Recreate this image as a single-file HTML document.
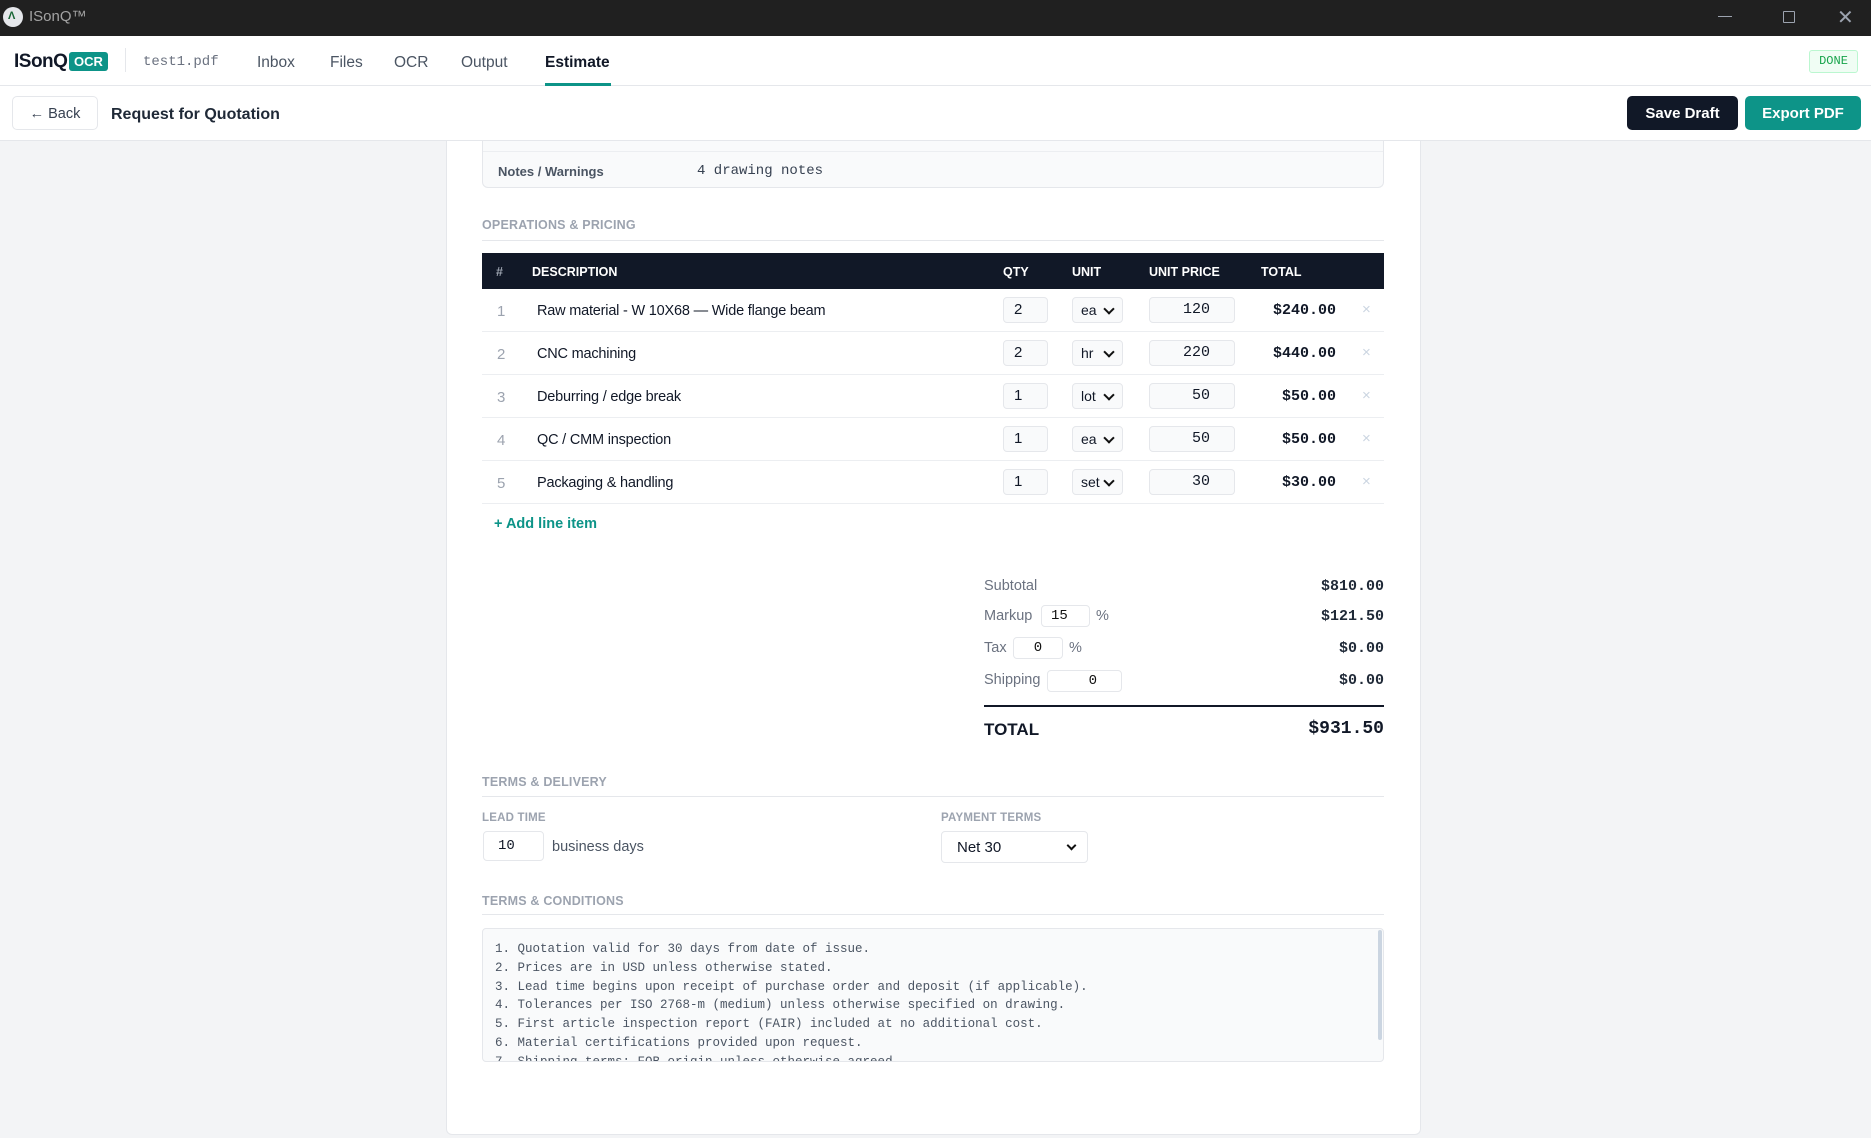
<!DOCTYPE html>
<html><head><meta charset="utf-8"><style>
*{box-sizing:border-box;margin:0;padding:0}
body{width:1871px;height:1138px;overflow:hidden;background:#f3f4f6;font-family:"Liberation Sans",sans-serif;color:#111827;position:relative}
.a{position:absolute}
.mono{font-family:"Liberation Mono",monospace}
.lbl{font-size:12.5px;font-weight:bold;color:#9ca3af;letter-spacing:.2px}
.inp{position:absolute;background:#f9fafb;border:1px solid #e5e7eb;border-radius:4px;height:26px;font-size:15px;line-height:24px}
.row{position:absolute;left:482px;width:902px;height:43px;border-bottom:1px solid #eceef1}
.row .n{position:absolute;left:15px;top:14px;font-size:15px;color:#9ca3af}
.row .d{position:absolute;left:55px;top:14px;font-size:14.5px;letter-spacing:-.2px}
.row .q{left:521px;top:8px;width:45px;padding-left:10px}
.row .u{left:590px;top:8px;width:51px;padding-left:8px;font-size:14px}
.row .u:after{content:"";position:absolute;right:9px;top:7px;width:6px;height:6px;border-right:2px solid #111;border-bottom:2px solid #111;transform:rotate(45deg)}
.row .p{left:667px;top:8px;width:86px;text-align:right;padding-right:24px;font-family:"Liberation Mono",monospace}
.row .t{position:absolute;right:48px;top:13px;font-size:15px;font-weight:bold;font-family:"Liberation Mono",monospace}
.row .x{position:absolute;left:880px;top:12px;font-size:15px;color:#cbd5e1}
.sm{position:absolute;left:984px;font-size:14.5px;color:#6b7280}
.sv{position:absolute;right:487px;font-size:15px;font-weight:bold;font-family:"Liberation Mono",monospace;color:#1f2937}
.si{position:absolute;background:#fff;border:1px solid #e5e7eb;border-radius:4px;height:22px;font-family:"Liberation Mono",monospace;font-size:14px;line-height:20px;color:#111}
</style></head><body>
<div class="a" style="left:0;top:0;width:1871px;height:36px;background:#202020"></div>
<div class="a" style="left:3px;top:7px;width:20px;height:20px;border-radius:50%;background:#e5e7eb"></div>
<div class="a" style="left:8px;top:10px;font-size:11px;color:#166534;font-weight:bold">Λ</div>
<div class="a" style="left:29px;top:8px;font-size:15px;color:#a3a3a3">ISonQ™</div>
<div class="a" style="left:1718px;top:16px;width:14px;height:1px;background:#9ca3af"></div>
<div class="a" style="left:1783px;top:11px;width:12px;height:12px;border:1px solid #9ca3af;border-radius:1px"></div>
<div class="a" style="left:1837px;top:5px;font-size:20px;color:#9ca3af">✕</div>

<div class="a" style="left:0;top:36px;width:1871px;height:50px;background:#fff;border-bottom:1px solid #e5e7eb"></div>
<div class="a" style="left:14px;top:51px;font-size:19px;font-weight:bold;letter-spacing:-.5px">ISonQ</div>
<div class="a" style="left:69px;top:52px;background:#0d9488;color:#fff;font-size:13px;font-weight:bold;padding:2px 5px;border-radius:3px;line-height:15px">OCR</div>
<div class="a" style="left:125px;top:48px;width:1px;height:24px;background:#e5e7eb"></div>
<div class="a mono" style="left:143px;top:54px;font-size:14px;color:#6b7280">test1.pdf</div>
<div class="a" style="left:257px;top:54px;font-size:15.5px;color:#4b5563">Inbox</div>
<div class="a" style="left:330px;top:54px;font-size:15.5px;color:#4b5563">Files</div>
<div class="a" style="left:394px;top:54px;font-size:15.5px;color:#4b5563">OCR</div>
<div class="a" style="left:461px;top:54px;font-size:15.5px;color:#4b5563">Output</div>
<div class="a" style="left:545px;top:54px;font-size:15.5px;font-weight:bold">Estimate</div>
<div class="a" style="left:545px;top:83px;width:66px;height:3px;background:#0d9488"></div>
<div class="a mono" style="left:1809px;top:50px;width:49px;height:23px;border:1px solid #bbf7d0;background:#f0fdf4;color:#16a34a;font-size:12px;text-align:center;line-height:21px;border-radius:3px">DONE</div>

<div class="a" style="left:0;top:86px;width:1871px;height:55px;background:#fff;border-bottom:1px solid #e5e7eb"></div>
<div class="a" style="left:12px;top:96px;width:86px;height:34px;border:1px solid #e5e7eb;border-radius:5px;font-size:14.5px;line-height:34px;text-align:center;color:#374151">← Back</div>
<div class="a" style="left:111px;top:106px;font-size:16px;font-weight:bold;color:#1f2937">Request for Quotation</div>
<div class="a" style="left:1627px;top:96px;width:111px;height:34px;background:#111827;color:#fff;border-radius:5px;font-size:15px;font-weight:bold;line-height:36px;text-align:center">Save Draft</div>
<div class="a" style="left:1745px;top:96px;width:116px;height:34px;background:#0d9488;color:#fff;border-radius:5px;font-size:15px;font-weight:bold;line-height:36px;text-align:center">Export PDF</div>

<div class="a" style="left:446px;top:141px;width:975px;height:994px;background:#fff;border:1px solid #e5e7eb;border-top:none;border-radius:0 0 6px 6px"></div>
<div class="a" style="left:482px;top:141px;width:902px;height:47px;background:#f9fafb;border:1px solid #e5e7eb;border-top:none;border-radius:0 0 6px 6px"></div>
<div class="a" style="left:483px;top:151px;width:900px;height:1px;background:#eceef1"></div>
<div class="a" style="left:498px;top:164px;font-size:13px;font-weight:bold;color:#4b5563">Notes / Warnings</div>
<div class="a mono" style="left:697px;top:163px;font-size:14px;color:#374151">4 drawing notes</div>

<div class="a lbl" style="left:482px;top:218px">OPERATIONS &amp; PRICING</div>
<div class="a" style="left:482px;top:240px;width:902px;height:1px;background:#e5e7eb"></div>
<div class="a" style="left:482px;top:253px;width:902px;height:36px;background:#111827;color:#fff;font-size:12.5px;font-weight:bold">
<span class="a" style="left:14px;top:12px;color:#9ca3af">#</span>
<span class="a" style="left:50px;top:12px">DESCRIPTION</span>
<span class="a" style="left:521px;top:12px">QTY</span>
<span class="a" style="left:590px;top:12px">UNIT</span>
<span class="a" style="left:667px;top:12px">UNIT PRICE</span>
<span class="a" style="left:779px;top:12px">TOTAL</span>
</div>
<div class="row" style="top:289px"><span class="n">1</span><span class="d">Raw material - W 10X68 — Wide flange beam</span><span class="inp q">2</span><span class="inp u">ea</span><span class="inp p">120</span><span class="t">$240.00</span><span class="x">×</span></div>
<div class="row" style="top:332px"><span class="n">2</span><span class="d">CNC machining</span><span class="inp q">2</span><span class="inp u">hr</span><span class="inp p">220</span><span class="t">$440.00</span><span class="x">×</span></div>
<div class="row" style="top:375px"><span class="n">3</span><span class="d">Deburring / edge break</span><span class="inp q">1</span><span class="inp u">lot</span><span class="inp p">50</span><span class="t">$50.00</span><span class="x">×</span></div>
<div class="row" style="top:418px"><span class="n">4</span><span class="d">QC / CMM inspection</span><span class="inp q">1</span><span class="inp u">ea</span><span class="inp p">50</span><span class="t">$50.00</span><span class="x">×</span></div>
<div class="row" style="top:461px"><span class="n">5</span><span class="d">Packaging &amp; handling</span><span class="inp q">1</span><span class="inp u">set</span><span class="inp p">30</span><span class="t">$30.00</span><span class="x">×</span></div>
<div class="a" style="left:494px;top:516px;font-size:14.5px;font-weight:bold;color:#0d9488">+ Add line item</div>

<div class="sm" style="top:578px">Subtotal</div><div class="sv" style="top:578px">$810.00</div>
<div class="sm" style="top:608px">Markup</div><div class="si" style="left:1041px;top:605px;width:49px;padding-left:9px">15</div><div class="sm" style="left:1096px;top:608px">%</div><div class="sv" style="top:608px">$121.50</div>
<div class="sm" style="top:640px">Tax</div><div class="si" style="left:1013px;top:637px;width:50px;text-align:center">0</div><div class="sm" style="left:1069px;top:640px">%</div><div class="sv" style="top:640px">$0.00</div>
<div class="sm" style="top:672px">Shipping</div><div class="si" style="left:1047px;top:670px;width:75px;text-align:right;padding-right:24px">0</div><div class="sv" style="top:672px">$0.00</div>
<div class="a" style="left:984px;top:705px;width:400px;height:2px;background:#111827"></div>
<div class="a" style="left:984px;top:720px;font-size:17px;font-weight:bold">TOTAL</div>
<div class="a mono" style="right:487px;top:719px;font-size:18px;font-weight:bold">$931.50</div>

<div class="a lbl" style="left:482px;top:775px">TERMS &amp; DELIVERY</div>
<div class="a" style="left:482px;top:796px;width:902px;height:1px;background:#e5e7eb"></div>
<div class="a lbl" style="left:482px;top:812px;font-size:11.5px">LEAD TIME</div>
<div class="a mono" style="left:483px;top:831px;width:61px;height:30px;border:1px solid #e5e7eb;border-radius:4px;font-size:14px;line-height:28px;padding-left:14px">10</div>
<div class="a" style="left:552px;top:839px;font-size:14.5px;color:#4b5563">business days</div>
<div class="a lbl" style="left:941px;top:812px;font-size:11.5px">PAYMENT TERMS</div>
<div class="a" style="left:941px;top:831px;width:147px;height:32px;border:1px solid #e5e7eb;border-radius:4px;font-size:15px;line-height:32px;padding-left:15px">Net 30<span class="a" style="right:12px;top:10px;width:7px;height:7px;border-right:2px solid #111;border-bottom:2px solid #111;transform:rotate(45deg)"></span></div>

<div class="a lbl" style="left:482px;top:894px">TERMS &amp; CONDITIONS</div>
<div class="a" style="left:482px;top:914px;width:902px;height:1px;background:#e5e7eb"></div>
<div class="a mono" style="left:482px;top:928px;width:902px;height:134px;background:#f9fafb;border:1px solid #e5e7eb;border-radius:4px;overflow:hidden;font-size:12.5px;line-height:18.8px;color:#4b5563;padding:11px 0 0 12px;white-space:pre">1. Quotation valid for 30 days from date of issue.
2. Prices are in USD unless otherwise stated.
3. Lead time begins upon receipt of purchase order and deposit (if applicable).
4. Tolerances per ISO 2768-m (medium) unless otherwise specified on drawing.
5. First article inspection report (FAIR) included at no additional cost.
6. Material certifications provided upon request.
7. Shipping terms: FOB origin unless otherwise agreed.</div>
<div class="a" style="left:1378px;top:930px;width:4px;height:110px;background:#cbd5e1;border-radius:2px"></div>
</body></html>
